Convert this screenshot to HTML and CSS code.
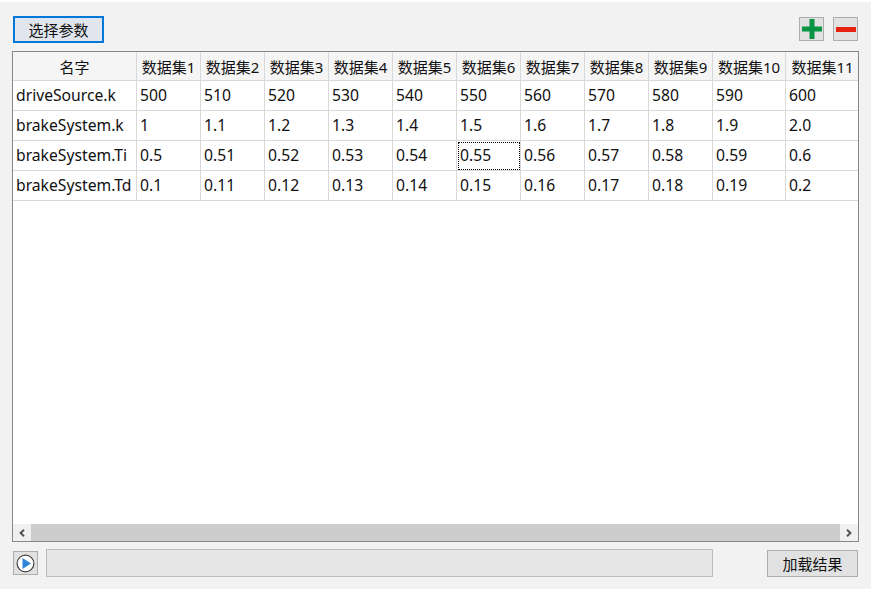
FILE: index.html
```html
<!DOCTYPE html>
<html lang="zh-CN">
<head>
    <meta charset="UTF-8">
    <title>选择参数</title>
    <link rel="stylesheet" href="styles.css">
</head>
<body>
    <div class="window">
        <div class="toolbar">
            <button class="btn btn-focus">选择参数</button>
            <div class="tool-group">
                <button class="icon-btn">
                    <svg width="20" height="20" viewBox="0 0 20 20"><path d="M7.500 0h5v7.500h7.500v5h-7.500v7.500h-5v-7.500H0v-5h7.500z" fill="#0b9444"/></svg>
                </button>
                <button class="icon-btn">
                    <svg width="20" height="5" viewBox="0 0 20 5"><rect width="20" height="5" fill="#e8200f"/></svg>
                </button>
            </div>
        </div>

        <div class="table-frame">
            <div class="table-area">
                <table class="data-table">
                    <colgroup>
                        <col class="col-name">
                        <col class="col-n"><col class="col-n"><col class="col-n"><col class="col-n">
                        <col class="col-n"><col class="col-n"><col class="col-n"><col class="col-n">
                        <col class="col-n">
                        <col class="col-w"><col class="col-w">
                    </colgroup>
                    <thead>
                        <tr>
                            <th>名字</th><th>数据集1</th><th>数据集2</th><th>数据集3</th><th>数据集4</th><th>数据集5</th>
                            <th>数据集6</th><th>数据集7</th><th>数据集8</th><th>数据集9</th><th>数据集10</th><th>数据集11</th>
                        </tr>
                    </thead>
                    <tbody>
                        <tr>
                            <td>driveSource.k</td><td>500</td><td>510</td><td>520</td><td>530</td><td>540</td>
                            <td>550</td><td>560</td><td>570</td><td>580</td><td>590</td><td>600</td>
                        </tr>
                        <tr>
                            <td>brakeSystem.k</td><td>1</td><td>1.1</td><td>1.2</td><td>1.3</td><td>1.4</td>
                            <td>1.5</td><td>1.6</td><td>1.7</td><td>1.8</td><td>1.9</td><td>2.0</td>
                        </tr>
                        <tr>
                            <td>brakeSystem.Ti</td><td>0.5</td><td>0.51</td><td>0.52</td><td>0.53</td><td>0.54</td>
                            <td class="current">0.55</td><td>0.56</td><td>0.57</td><td>0.58</td><td>0.59</td><td>0.6</td>
                        </tr>
                        <tr>
                            <td>brakeSystem.Td</td><td>0.1</td><td>0.11</td><td>0.12</td><td>0.13</td><td>0.14</td>
                            <td>0.15</td><td>0.16</td><td>0.17</td><td>0.18</td><td>0.19</td><td>0.2</td>
                        </tr>
                    </tbody>
                </table>
            </div>
            <div class="hscroll">
                <span class="arrow">
                    <svg width="8" height="8" viewBox="0 0 8 8"><path d="M6 .8 2.600 4 6 7.200" fill="none" stroke="#555" stroke-width="2"/></svg>
                </span>
                <div class="thumb"></div>
                <span class="arrow">
                    <svg width="8" height="8" viewBox="0 0 8 8"><path d="M2 .8 5.400 4 2 7.200" fill="none" stroke="#555" stroke-width="2"/></svg>
                </span>
            </div>
        </div>

        <div class="bottom-bar">
            <button class="play-btn">
                <svg width="19" height="19" viewBox="0 0 19 19">
                    <circle cx="9.500" cy="9.500" r="8.400" fill="#fff" stroke="#444" stroke-width="1.200"/>
                    <path d="M6.500 4 15 9.500 6.500 15z" fill="#2f86d8"/>
                </svg>
            </button>
            <div class="progress"></div>
            <button class="btn btn-load">加载结果</button>
        </div>
    </div>
</body>
</html>
```

FILE: styles.css
```css
html, body {
    margin: 0;
    height: 100%;
    overflow: hidden;
}
body {
    background: #f2f2f2;
    border-top: 2px solid #fff;
    box-sizing: border-box;
    font-family: "Noto Sans", "Noto Sans CJK SC", sans-serif;
    font-size: 15px;
    color: #111;
}
.window {
    display: flex;
    flex-direction: column;
    padding: 14px 12px 0 12px;
}
.toolbar {
    display: flex;
    justify-content: space-between;
    height: 35px;
}
.tool-group {
    display: flex;
    gap: 9px;
    padding-top: 1px;
    margin-right: 1px;
}
.btn {
    font: inherit;
    color: #111;
    padding: 0;
    background: #e1e1e1;
    border: 1px solid #adadad;
    box-sizing: border-box;
}
.btn-focus {
    width: 91px;
    height: 27px;
    margin-left: 1px;
    background: #e1e6ee;
    border: 2px solid #0078d7;
}
.icon-btn {
    width: 25px;
    height: 24px;
    padding: 0;
    display: flex;
    align-items: center;
    justify-content: center;
    background: #e1e1e1;
    border: 1px solid #adadad;
}
.table-frame {
    height: 489px;
    display: flex;
    flex-direction: column;
    border: 1px solid #828790;
    background: #fff;
}
.table-area {
    flex: 1;
    overflow: hidden;
}
.data-table {
    table-layout: fixed;
    width: 845px;
    border-collapse: separate;
    border-spacing: 0;
}
.col-name { width: 124px; }
.col-n { width: 64px; }
.col-w { width: 73px; }
.data-table th {
    height: 28px;
    padding: 0;
    font-weight: normal;
    text-align: center;
    white-space: nowrap;
    background: #f5f5f5;
    border-right: 1px solid #d8d8d8;
    border-bottom: 1px solid #d8d8d8;
}
.data-table td {
    height: 27px;
    padding: 0 0 2px 3px;
    font-size: 15.7px;
    white-space: nowrap;
    overflow: hidden;
    border-right: 1px solid #d8d8d8;
    border-bottom: 1px solid #d8d8d8;
}
.data-table th:last-child,
.data-table td:last-child { border-right: none; }
.data-table td.current {
    outline: 1px dotted #000;
    outline-offset: -2px;
}
.hscroll {
    display: flex;
    height: 17px;
    background: #f0f0f0;
}
.arrow {
    width: 18px;
    display: flex;
    align-items: center;
    justify-content: center;
}
.thumb {
    flex: 1;
    background: #cdcdcd;
}
.bottom-bar {
    display: flex;
    align-items: flex-start;
    margin-top: 7px;
    height: 29px;
}
.play-btn {
    width: 25px;
    height: 24px;
    margin: 2px 0 0 1px;
    padding: 0;
    display: flex;
    align-items: center;
    justify-content: center;
    background: #e1e1e1;
    border: 1px solid #adadad;
}
.progress {
    width: 665px;
    height: 26px;
    margin-left: 8px;
    background: #e6e6e6;
    border: 1px solid #bcbcbc;
}
.btn-load {
    width: 91px;
    height: 27px;
    margin-left: auto;
    margin-right: 1px;
    margin-top: 1px;
}
```
